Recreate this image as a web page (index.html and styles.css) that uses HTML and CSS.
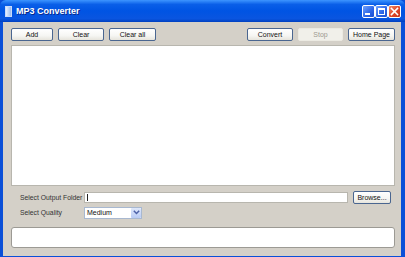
FILE: index.html
```html
<!DOCTYPE html>
<html>
<head>
<meta charset="utf-8">
<link rel="stylesheet" href="styles.css">
</head>
<body>
<div class="window">
  <div class="titlebar">
    <div class="app-icon"></div>
    <div class="title">MP3 Converter</div>
    <div class="ctrls">
      <div class="ctrl min"><span class="min-bar"></span></div>
      <div class="ctrl max"><span class="max-box"></span></div>
      <div class="ctrl close">
        <svg width="9" height="9" viewBox="0 0 9 9"><path d="M1.5 1.5 L7.5 7.5 M7.5 1.5 L1.5 7.5" stroke="#fff" stroke-width="1.6" stroke-linecap="square"/></svg>
      </div>
    </div>
  </div>
  <div class="client">
    <div class="toolbar">
      <div class="group">
        <div class="btn w42">Add</div>
        <div class="btn w46">Clear</div>
        <div class="btn w47">Clear all</div>
      </div>
      <div class="group">
        <div class="btn w46">Convert</div>
        <div class="btn w45 disabled">Stop</div>
        <div class="btn w47">Home Page</div>
      </div>
    </div>
    <div class="list"></div>
    <div class="form">
      <div class="label">Select Output Folder</div>
      <div class="field-row">
        <div class="textbox"><span class="caret"></span></div>
        <div class="btn browse">Browse...</div>
      </div>
      <div class="label">Select Quality</div>
      <div class="field-row">
        <div class="select">
          <span class="sel-text">Medium</span>
          <span class="sel-arrow">
            <svg width="7" height="5" viewBox="0 0 7 5"><path d="M0.8 0.8 L3.5 3.5 L6.2 0.8" fill="none" stroke="#4d61a8" stroke-width="1.5"/></svg>
          </span>
        </div>
      </div>
    </div>
    <div class="status"></div>
  </div>
</div>
</body>
</html>
```
FILE: styles.css
```css
html, body {
  margin: 0;
  padding: 0;
}
body {
  width: 405px;
  height: 257px;
  overflow: hidden;
  font-family: "Liberation Sans", Arial, sans-serif;
}
.window {
  width: 405px;
  height: 257px;
  box-sizing: border-box;
  display: flex;
  flex-direction: column;
  background: #0a4fd8;
  padding: 0 4px 3px 3px;
}
.titlebar {
  height: 22px;
  flex: none;
  margin: 0 -4px 0 -3px;
  padding: 0 4px 0 5px;
  display: flex;
  align-items: center;
  background: linear-gradient(to bottom, #3d95ff 0%, #0a5fe8 20%, #0054e3 50%, #0a55e0 85%, #0040c0 100%);
  border-radius: 6px 6px 0 0;
}
.app-icon {
  width: 7px;
  height: 11px;
  background: linear-gradient(to right, #e8f0ff, #9cbcf0);
  border: 1px solid #c9dafa;
  box-sizing: border-box;
  margin-right: 4px;
}
.title {
  color: #fff;
  font-weight: bold;
  font-size: 9px;
  flex: 1;
  text-shadow: 1px 1px 0 #0a2a8a;
}
.ctrls {
  display: flex;
}
.ctrl {
  width: 13px;
  height: 13px;
  box-sizing: border-box;
  border: 1px solid #fff;
  border-radius: 2px;
  display: flex;
  align-items: center;
  justify-content: center;
  position: relative;
}
.min, .max {
  background: linear-gradient(135deg, #6fa2ff, #2a64e6 60%, #1c4fd0);
}
.min-bar {
  position: absolute;
  left: 2px;
  bottom: 2px;
  width: 5px;
  height: 2px;
  background: #fff;
}
.max-box {
  width: 7px;
  height: 7px;
  box-sizing: border-box;
  border: 1px solid #fff;
  border-top-width: 2px;
}
.close {
  background: linear-gradient(135deg, #f08a66, #e0482a 55%, #c6361a);
}
.client {
  flex: 1;
  background: #d4d0c8;
  display: flex;
  flex-direction: column;
  padding: 6px 6px 8px 8px;
}
.toolbar {
  display: flex;
  justify-content: space-between;
  height: 13px;
  flex: none;
}
.group {
  display: flex;
  gap: 5px;
}
.btn {
  height: 13px;
  box-sizing: border-box;
  border: 1px solid #4a6690;
  border-radius: 2px;
  background: linear-gradient(to bottom, #ffffff 0%, #f6f6f3 60%, #e6e4dc 100%);
  font-size: 7px;
  color: #111;
  display: flex;
  align-items: center;
  justify-content: center;
  white-space: nowrap;
}
.w42 { width: 42px; }
.w45 { width: 45px; }
.w46 { width: 46px; }
.w47 { width: 47px; }
.btn.disabled {
  border-color: #eceae2;
  background: #f1f0ea;
  color: #9c9a90;
}
.list {
  margin-top: 4px;
  height: 141px;
  flex: none;
  background: #fff;
  border: 1px solid #b8b6ae;
  box-sizing: border-box;
}
.form {
  display: grid;
  grid-template-columns: 73px 1fr;
  grid-template-rows: 15px 15px;
  margin-top: 4px;
  align-items: center;
}
.label {
  font-size: 6.8px;
  color: #333;
  padding-left: 9px;
  white-space: nowrap;
}
.field-row {
  display: flex;
  align-items: center;
}
.textbox {
  width: 264px;
  height: 11px;
  background: #fff;
  border: 1px solid #b8b6ae;
  box-sizing: border-box;
  display: flex;
  align-items: center;
  padding-left: 2px;
}
.caret {
  width: 1px;
  height: 7px;
  background: #222;
}
.browse {
  width: 38px;
  margin-left: 5px;
}
.select {
  width: 58px;
  height: 12px;
  background: #fff;
  border: 1px solid #a8b8d0;
  box-sizing: border-box;
  display: flex;
  align-items: center;
}
.sel-text {
  font-size: 7px;
  color: #111;
  flex: 1;
  padding-left: 2px;
}
.sel-arrow {
  width: 10px;
  height: 10px;
  background: linear-gradient(to bottom, #dfe8fb, #b9cbf5);
  border-radius: 1px;
  display: flex;
  align-items: center;
  justify-content: center;
}
.status {
  margin-top: 7px;
  height: 21px;
  flex: none;
  background: #fff;
  border: 1px solid #9c9a94;
  border-radius: 3px;
  box-sizing: border-box;
}
```
